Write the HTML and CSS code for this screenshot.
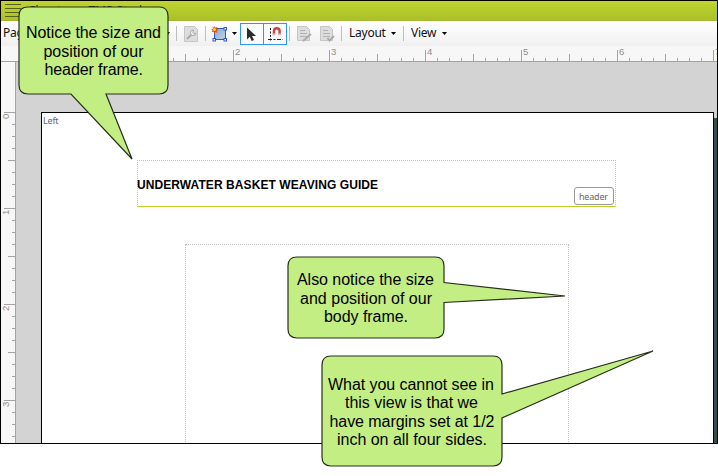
FILE: index.html
```html
<!DOCTYPE html>
<html lang="en">
<head>
<meta charset="utf-8">
<title>Page layout editor</title>
<link rel="stylesheet" href="styles.css">
</head>
<body>
<main class="window">
  <header class="titlebar">
    <svg class="burger" width="16" height="15"><path d="M0 .5h16M0 4.500h16M0 8.500h16M0 12.500h16"/></svg>
    <span class="caption">Chapters - TMS-Study</span>
  </header>
  <nav class="toolbar">
    <span class="menu first">Page</span>
    <i class="arrow a1"></i><i class="sep s1"></i>
    <svg class="props" width="14" height="16" viewBox="0 0 14 16"><path class="sheet" d="M.5.5h10l3 3v12H.5z"/><path class="wrench" d="M3 13l5-5"/><path class="ring" d="M9.500 4A2.800 2.800 0 1 0 12 7l-2.200.5-1-1z"/></svg>
    <i class="sep s2"></i>
    <svg class="frame" width="17" height="16" viewBox="0 0 17 16"><defs><linearGradient id="fg" x2="1" y2="1"><stop stop-color="#86add3"/><stop offset="1" stop-color="#bed4e7"/></linearGradient></defs><rect x="3.500" y="2.500" width="11" height="11" fill="url(#fg)" stroke="#3158c8"/><g fill="#fff" stroke="#2c56d4"><rect x="13" y="1.500" width="2.500" height="2.500"/><rect x="2" y="12.500" width="2.500" height="2.500"/><rect x="13" y="12.500" width="2.500" height="2.500"/></g><path fill="#e84a12" d="M3.500 0l1 1.800 2-.8-.7 2 1.700 1-1.800.8.600 2-2-.8-1 1.500-.7-1.800-2 .3 1-1.700L0 3.200l2-.3L1.500.8l1.700.9z"/><circle cx="3.500" cy="3.500" r="1.500" fill="#ffd52d"/></svg>
    <i class="arrow a2"></i>
    <div class="toggles">
      <span class="toggle"><svg width="21" height="20" viewBox="0 0 21 20"><path fill="#2b2b2b" d="M6 3.500v12l2.800-2.700 1.900 4.200 2.300-1-2-4h4z"/></svg></span>
      <span class="toggle"><svg width="21" height="20" viewBox="0 0 21 20"><path d="M6.500 4v14" fill="none" stroke="#222" stroke-dasharray="2 1.500"/><path d="M4 15.500h15" fill="none" stroke="#222" stroke-dasharray="4 1.500 2 1.500"/><path d="M10 11V7a2.800 2.800 0 0 1 5.600 0v4" fill="none" stroke="#c9473d" stroke-width="2.400"/><path d="M8.800 10.500h2.400M14.400 10.500h2.400" stroke="#ccc" stroke-width="2"/></svg></span>
    </div>
    <i class="sep s3"></i>
    <svg class="doc" width="15" height="16" viewBox="0 0 15 16"><path class="sheet" d="M.5.5h9l3 3v11H.5z"/><path class="lines" d="M3 4.500h5M3 7.500h7M3 10.500h7"/><path class="pen" d="M6 15l8-7"/></svg>
    <svg class="doc d2" width="15" height="16" viewBox="0 0 15 16"><path class="sheet" d="M.5.5h9l3 3v11H.5z"/><path class="lines" d="M3 4.500h5M3 7.500h7M3 10.500h7"/><path class="pen" d="M7.500 12l2 2.500 4.500-4.500"/></svg>
    <i class="sep s4"></i>
    <span class="menu layout">Layout</span><i class="arrow a3"></i>
    <i class="sep s5"></i>
    <span class="menu view">View</span><i class="arrow a4"></i>
  </nav>
  <svg class="hruler" width="716" height="16">
    <defs><pattern id="h" x="40" width="96" height="16" patternUnits="userSpaceOnUse"><path d="M.5 4v11M12.500 12v3M24.500 12v3M36.500 12v3M48.500 8v7M60.500 12v3M72.500 12v3M84.500 12v3"/></pattern></defs>
    <rect x="40" width="676" height="15" fill="url(#h)"/>
    <path d="M0 15.500h716"/>
    <g><text x="234" y="9">2</text><text x="330" y="9">3</text><text x="426" y="9">4</text><text x="522" y="9">5</text><text x="618" y="9">6</text><text x="714" y="9">7</text></g>
  </svg>
  <section class="workspace">
    <svg class="vruler" width="15" height="381">
      <defs><pattern id="v" y="50" width="15" height="96" patternUnits="userSpaceOnUse"><path d="M3 .5h11M11 12.500h3M11 24.500h3M11 36.500h3M7 48.500h7M11 60.500h3M11 72.500h3M11 84.500h3"/></pattern></defs>
      <rect y="50" width="14" height="331" fill="url(#v)"/>
      <path d="M14.500 0v381"/>
      <g><text transform="translate(8 57) rotate(-90)">0</text><text transform="translate(8 153) rotate(-90)">1</text><text transform="translate(8 249) rotate(-90)">2</text><text transform="translate(8 345) rotate(-90)">3</text></g>
    </svg>
    <div class="desk">
      <article class="page">
        <span class="side">Left</span>
        <div class="header-frame"><h1>UNDERWATER BASKET WEAVING GUIDE</h1><span class="tag">header</span></div>
        <div class="body-frame"></div>
      </article>
      <div class="shadow"></div>
    </div>
  </section>
</main>
<svg class="callouts" width="718" height="476">
  <path d="M28 7H159Q168 7 168 16V85Q168 94 159 94H106L132 159L71 94H28Q19 94 19 85V16Q19 7 28 7Z"/>
  <path d="M297 257H435Q444 257 444 266V282.500L565 296L444 302.500V329Q444 338 435 338H297Q288 338 288 329V266Q288 257 297 257Z"/>
  <path d="M331 356H493Q502 356 502 365V394L653 351L502 418V457Q502 466 493 466H331Q322 466 322 457V365Q322 356 331 356Z"/>
  <g>
    <text x="26" y="38" textLength="135">Notice the size and</text><text x="43.500" y="56.500" textLength="100">position of our</text><text x="44.500" y="75" textLength="98.500">header frame.</text>
    <text x="297" y="285" textLength="137">Also notice the size</text><text x="300" y="303.500" textLength="132">and position of our</text><text x="324" y="322" textLength="84">body frame.</text>
    <text x="328" y="390" textLength="166">What you cannot see in</text><text x="345" y="408" textLength="133">this view is that we</text><text x="329.500" y="426.500" textLength="165">have margins set at 1/2</text><text x="337" y="445" textLength="150">inch on all four sides.</text>
  </g>
</svg>
</body>
</html>
```
FILE: styles.css
```css
* { box-sizing: border-box; }
body { margin: 0; width: 718px; height: 476px; overflow: hidden; background: #fff; font-family: "Liberation Sans", sans-serif; }
.window { width: 718px; height: 444px; border: 1px solid #000; display: flex; flex-direction: column; overflow: hidden; }
svg { display: block; flex: none; }
.titlebar { height: 20px; flex: none; display: flex; padding: 3px 0 0 4px; gap: 7px; background: linear-gradient(#c0d431, #b4cb2c 50%, #abc02a); border-bottom: 1px solid #a5b833; }
.burger path { stroke: #56611a; }
.caption { font: 12px/16px "Open Sans", sans-serif; color: #20240a; margin-top: -1px; }
.toolbar { height: 25px; flex: none; display: flex; align-items: center; background: linear-gradient(#fff, #f0f0f0); }
.menu { font: 12px/20px "Noto Sans", "Open Sans", sans-serif; letter-spacing: -.25px; color: #111; white-space: nowrap; flex: none; margin-top: -1px; }
.first { width: 160px; padding-left: 2px; }
.arrow { flex: none; width: 5px; height: 3px; background: #000; clip-path: polygon(0 0, 100% 0, 50% 100%); }
.a1 { margin-left: 4px; }
.sep { flex: none; width: 1px; height: 15px; background: #bdbdbd; }
.s1 { margin-left: 6px; }
.props { margin-left: 7px; }
.sheet { fill: #ddd; stroke: #c6c6c6; }
.wrench { stroke: #aaa; stroke-width: 2; }
.ring { fill: #eee; stroke: #aaa; }
.s2 { margin-left: 7px; }
.frame { margin-left: 5px; }
.a2 { margin-left: 4px; }
.toggles { display: flex; margin-left: 3px; }
.toggle { width: 24px; height: 22px; border: 1px solid #3295f4; background: #f8fafc; }
.toggle + .toggle { margin-left: -1px; }
.s3 { margin-left: 2px; }
.doc { margin-left: 7px; }
.d2 { margin-left: 8px; }
.lines { fill: none; stroke: #b0b0b0; }
.pen { fill: none; stroke: #aaa; stroke-width: 2; }
.s4 { margin-left: 6px; }
.layout { width: 42px; margin-left: 7px; }
.s5 { margin-left: 7px; }
.view { width: 31px; margin-left: 7px; }
.hruler, .vruler { background: #f7f7f7; }
.hruler path, .vruler path { stroke: #a3a3a3; }
.hruler text, .vruler text { font: 9.5px "Liberation Sans", sans-serif; fill: #8c8c8c; }
.workspace { display: flex; height: 381px; flex: none; background: #d3d3d3; }
.desk { display: flex; padding: 50px 0 0 25px; }
.page { width: 673px; height: 340px; background: #fff; border: 1px solid #000; border-bottom: 0; padding-top: 47px; position: relative; }
.side { position: absolute; left: 1px; top: 2px; font: 9px/12px "Noto Sans", sans-serif; letter-spacing: -.2px; color: #666; }
.header-frame { margin-left: 95px; width: 479px; height: 47px; border: 1px dotted #c0c0c0; border-bottom: 1px solid #b9cf28; display: flex; justify-content: space-between; }
h1 { margin: 16px 0 0 -1px; font-size: 12px; line-height: 16px; letter-spacing: .08px; white-space: nowrap; color: #000; }
.tag { margin: 26px 1px 0 0; width: 40px; height: 18px; border: 1px solid #999; border-radius: 3px; font: 9px/17px "Noto Sans", sans-serif; letter-spacing: -.2px; color: #666; padding-left: 4px; }
.body-frame { margin: 37px 0 0 143px; width: 384px; height: 210px; border: 1px dotted #c0c0c0; border-bottom: 0; }
.shadow { width: 3px; margin-top: 6px; background: #2f4f50; }
.callouts { position: absolute; left: 0; top: 0; }
.callouts path { fill: #c3ee84; stroke: #26301a; stroke-width: 1.2; }
.callouts text { font: 16px "Liberation Sans", sans-serif; fill: #000; }
```
